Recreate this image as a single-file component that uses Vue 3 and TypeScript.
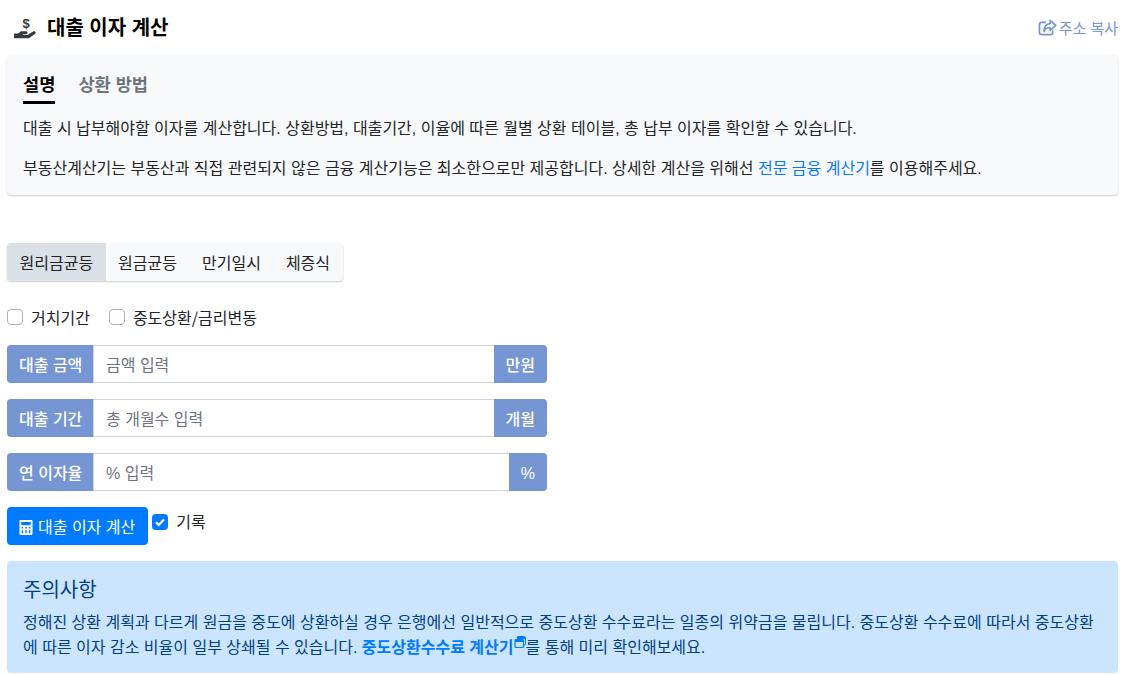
<template>
  <div class="page">
    <header class="head">
      <h1 class="title">
        <svg class="hand" viewBox="0 -2 24 24" width="24" height="24">
          <path d="M0 15.500h4l2.400-1.700c.5-.4 1-.5 1.700-.5h4.300c1.500 0 1.500 2.600 0 2.600H9.300c-.6 0-.6.9 0 .9h4.500l5.300-3.300c1.700-1 3.700 1 2 2.300l-5.300 3.900c-.5.300-1 .5-1.600.5H0z" fill="#343a40" />
          <text x="12" y="10" text-anchor="middle" class="dollar">$</text>
        </svg>
        <span>대출 이자 계산</span>
      </h1>
      <a class="share">
        <svg viewBox="0 0 20 18" width="19" height="17">
          <path d="M8.500 3.500H3.500a2 2 0 0 0-2 2v9a2 2 0 0 0 2 2h10a2 2 0 0 0 2-2v-2.500" fill="none" stroke="#7595d3" stroke-width="1.800" />
          <path d="M12.800 1.500l6 5.200-6 5.200V9c-3.500 0-5.400 1-6.400 4.200 0-5.300 2.600-8.200 6.400-8.400z" fill="none" stroke="#7595d3" stroke-width="1.800" stroke-linejoin="round" />
        </svg>
        <span class="share-text">주소 복사</span>
      </a>
    </header>

    <section class="panel">
      <nav class="tabs">
        <span class="tab on">설명</span>
        <span class="tab">상환 방법</span>
      </nav>
      <p>대출 시 납부해야할 이자를 계산합니다. 상환방법, 대출기간, 이율에 따른 월별 상환 테이블, 총 납부 이자를 확인할 수 있습니다.</p>
      <p>부동산계산기는 부동산과 직접 관련되지 않은 금융 계산기능은 최소한으로만 제공합니다. 상세한 계산을 위해선 <a class="link">전문 금융 계산기</a>를 이용해주세요.</p>
    </section>

    <div class="methods">
      <button v-for="(m, i) in methods" :key="m" class="method" :class="{ active: i === 0 }">{{ m }}</button>
    </div>

    <div class="options">
      <label class="check"><span class="box"></span><span class="cjk">거치기간</span></label>
      <label class="check"><span class="box"></span><span class="cjk">중도상환/금리변동</span></label>
    </div>

    <div v-for="f in fields" :key="f.label" class="field">
      <span class="addon left">{{ f.label }}</span>
      <span class="input">{{ f.placeholder }}</span>
      <span class="addon right">{{ f.unit }}</span>
    </div>

    <div class="actions">
      <button class="submit">
        <svg viewBox="0 0 14 16" width="14" height="15">
          <path fill-rule="evenodd" d="M1.500 0h11A1.500 1.500 0 0 1 14 1.500v13a1.500 1.500 0 0 1-1.500 1.500h-11A1.500 1.500 0 0 1 0 14.500v-13A1.500 1.500 0 0 1 1.500 0zM2 2v3.500h10V2zM2.400 7.500V9H4V7.500zM6.200 7.500V9h1.600V7.500zM10 7.500V9h1.600V7.500zM2.400 11v3H4v-3zM6.200 11v3h1.600v-3zM10 11v3h1.600v-3z" fill="#fff" />
        </svg>
        대출 이자 계산
      </button>
      <label class="check record">
        <span class="box checked">
          <svg viewBox="0 0 16 16" width="16" height="16"><path d="M4 8.300l2.800 2.700L12 5.500" fill="none" stroke="#fff" stroke-width="2.200" /></svg>
        </span>기록
      </label>
    </div>

    <aside class="notice">
      <h2>주의사항</h2>
      <p>정해진 상환 계획과 다르게 원금을 중도에 상환하실 경우 은행에선 일반적으로 중도상환 수수료라는 일종의 위약금을 물립니다. 중도상환 수수료에 따라서 중도상환에 따른 이자 감소 비율이 일부 상쇄될 수 있습니다. <a class="strong">중도상환수수료 계산기<svg viewBox="0 0 12 13" width="12" height="13" class="ext"><path d="M3 1.500a1 1 0 0 1 1-1h6.500a1 1 0 0 1 1 1V8a1 1 0 0 1-1 1H9.500" fill="none" stroke="#007bff" stroke-width="1" /><rect x="3" y="1" width="8" height="2" fill="#007bff" /><rect x="1" y="3.500" width="8.500" height="8" rx="1" fill="#cce5ff" stroke="#007bff" stroke-width="1.200" /><rect x="1" y="3.500" width="8.500" height="2.500" fill="#007bff" /></svg></a>를 통해 미리 확인해보세요.</p>
    </aside>
  </div>
</template>

<script setup lang="ts">
const methods = ['원리금균등', '원금균등', '만기일시', '체증식']

const fields = [
  { label: '대출 금액', placeholder: '금액 입력', unit: '만원' },
  { label: '대출 기간', placeholder: '총 개월수 입력', unit: '개월' },
  { label: '연 이자율', placeholder: '% 입력', unit: '%' },
]
</script>

<style scoped>
.page {
  width: 1111px;
  margin-left: 7px;
  font-family: "Liberation Sans", "Noto Sans CJK KR", sans-serif;
  font-size: 16px;
  line-height: 24px;
  color: #212529;
}
.head {
  height: 55px;
  display: flex;
  justify-content: space-between;
  align-items: center;
}
.title {
  margin: 0;
  display: flex;
  align-items: center;
  gap: 9px;
  font-size: 20px;
  font-weight: 700;
  color: #000;
}
.hand { margin-left: 7px; }
.dollar { font-size: 13px; font-weight: 700; fill: #343a40; }
.share {
  display: flex;
  align-items: center;
  gap: 2px;
  color: #7595d3;
  font-size: 15px;
}
.share-text { padding-top: 2px; }
.panel {
  height: 140px;
  box-sizing: border-box;
  padding: 10px 16px;
  background: #f8f9fa;
  border-radius: 4px;
  box-shadow: 0 1px 2px rgba(0, 0, 0, .2);
}
.panel p { margin: 0 0 16px; }
.tabs {
  display: flex;
  gap: 23px;
  height: 39px;
  margin-bottom: 13px;
}
.tab {
  font-size: 17.600px;
  font-weight: 700;
  line-height: 40px;
  color: #6c757d;
}
.tab.on { color: #000; border-bottom: 3px solid #000; height: 36px; }
.link { color: #007bff; }
.methods {
  display: inline-flex;
  margin-top: 48px;
  background: #f8f9fa;
  border-radius: 4px;
  box-shadow: 0 1px 2px rgba(0, 0, 0, .2);
  overflow: hidden;
  vertical-align: top;
}
.method {
  height: 38px;
  padding: 4px 12.500px 0;
  border: 0;
  background: transparent;
  font: inherit;
  color: #212529;
}
.method.active { background: #dae0e5; }
.options {
  display: flex;
  gap: 19px;
  margin-top: 25px;
  height: 24px;
}
.check {
  display: flex;
  align-items: center;
  gap: 8px;
}
.cjk {
  font-family: "Noto Sans CJK KR", sans-serif;
  margin-top: -2px;
}
.box {
  width: 16px;
  height: 16px;
  margin-top: -2px;
  box-sizing: border-box;
  border: 1px solid #adb5bd;
  border-radius: 4px;
  background: #fff;
}
.box.checked {
  background: #007bff;
  border: 0;
}
.box svg { display: block; }
.field {
  display: flex;
  width: 540px;
  height: 38px;
  margin-bottom: 16px;
}
.options + .field { margin-top: 15px; }
.addon {
  display: flex;
  align-items: center;
  padding: 3px 12px 0;
  background: #7595d3;
  color: #fff;
  font-weight: 500;
}
.addon.left { border-radius: 4px 0 0 4px; width: 86px; box-sizing: border-box; white-space: nowrap; }
.addon.right { border-radius: 0 4px 4px 0; }
.input {
  flex: 1;
  display: flex;
  align-items: center;
  padding: 3px 12px 0;
  border: 1px solid #ced4da;
  border-right: 0;
  color: #6c757d;
}
.actions {
  display: flex;
  align-items: flex-start;
  gap: 4px;
  height: 38px;
}
.submit {
  height: 38px;
  padding: 3px 13px 0 12px;
  display: flex;
  align-items: center;
  gap: 5px;
  background: #007bff;
  color: #fff;
  border: 0;
  border-radius: 4px;
  font: inherit;
}
.record { margin-top: 4px; }
.notice {
  margin-top: 16px;
  height: 112px;
  box-sizing: border-box;
  padding: 14px 16px 0;
  background: #cce5ff;
  color: #004085;
  border-radius: 4px;
}
.notice h2 {
  margin: 0 0 5px;
  font-size: 20px;
  font-weight: 400;
  line-height: 30px;
}
.notice p {
  margin: 0;
  line-height: 25px;
}
.strong { color: #007bff; font-weight: 700; }
.ext { vertical-align: 4px; }
</style>

<style>
html, body { background: #fff; }
</style>
